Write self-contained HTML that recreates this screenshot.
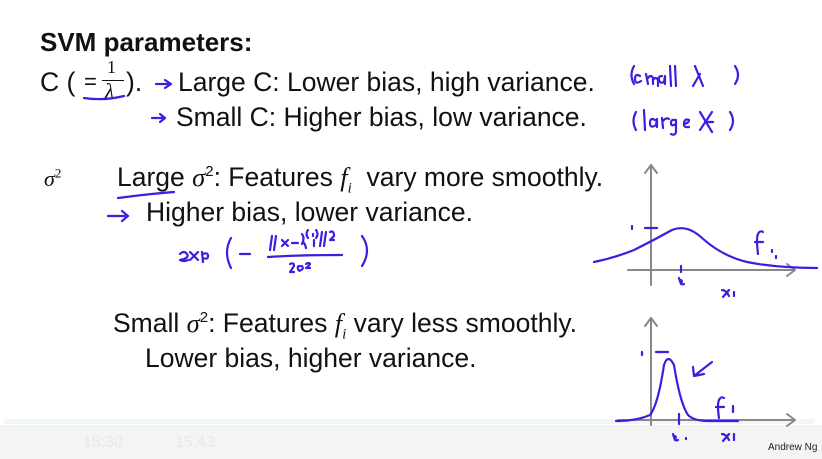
<!DOCTYPE html>
<html><head><style>
body{margin:0;width:822px;height:459px;background:#fff;overflow:hidden;position:relative;font-family:"Liberation Sans",Arial,sans-serif;color:#111}
.t{position:absolute;font-size:26.5px;white-space:nowrap;line-height:30px}
.i{font-family:"Liberation Serif",serif;font-style:italic}
sup,sub{line-height:0}
</style></head><body>
<div class="t" style="left:40px;top:27px;font-weight:bold;font-size:26px">SVM parameters:</div>
<div class="t" style="left:40px;top:67px">C (</div>
<div class="t" style="left:84px;top:67px;font-size:22px">=</div>
<div class="t" style="left:107px;top:52px;font-size:18px;font-family:'Liberation Serif',serif">1</div>
<div style="position:absolute;left:102px;top:80px;width:22px;height:1px;background:#111"></div>
<div class="t i" style="left:105px;top:80px;font-size:21px;line-height:22px">λ</div>
<div class="t" style="left:126px;top:67px">).</div>
<div class="t" style="left:178px;top:67px">Large C: Lower bias, high variance.</div>
<div class="t" style="left:176px;top:102px">Small C: Higher bias, low variance.</div>
<div class="t i" style="left:44px;top:164px;font-size:22px">σ<sup style="font-size:13px;font-style:normal">2</sup></div>
<div class="t" style="left:117px;top:162px">Large <span class="i">σ</span><sup style="font-size:15px">2</sup>: Features <span class="i">f<sub style="font-size:15px">i</sub></span>&nbsp; vary more smoothly.</div>
<div class="t" style="left:146px;top:197px">Higher bias, lower variance.</div>
<div class="t" style="left:113px;top:308px">Small <span class="i">σ</span><sup style="font-size:15px">2</sup>: Features <span class="i">f<sub style="font-size:15px">i</sub></span>&nbsp;vary less smoothly.</div>
<div class="t" style="left:145px;top:343px">Lower bias, higher variance.</div>
<div style="position:absolute;left:0;top:425px;width:822px;height:34px;background:#f4f4f4"></div>
<div style="position:absolute;left:4px;top:419px;width:810px;height:5px;background:#eef8f6"></div>
<div class="t" style="left:83px;top:428px;font-size:16px;color:#e8e8e8">15:30</div>
<div class="t" style="left:175px;top:428px;font-size:16px;color:#e8e8e8">15:43</div>
<div class="t" style="left:768px;top:441px;font-size:10px;color:#222;line-height:14px">Andrew Ng</div>
<svg width="822" height="459" style="position:absolute;left:0;top:0" fill="none" stroke-linecap="round" stroke-linejoin="round">
<g stroke="#888" stroke-width="2">
<path d="M651 285V165M645 173l6-8 6 8"/><path d="M628 270H795M787 264l8 6-8 6"/>
<path d="M651 425V318M645 326l6-8 6 8"/><path d="M618 420H795M787 414l8 6-8 6"/>
</g>
<g stroke="#3b1fe0" stroke-width="2.2">
<path d="M84 98q20 3 40 -2"/>
<path d="M156 84h14M165 80l6 4-6 4"/>
<path d="M152 118h12M160 114l5 4-5 4"/>
<path d="M118 198q30-4 56-6"/>
<path d="M108 216h20M122 211l6 5-6 5"/>
<path d="M634 66q-5 9 0 18M640 76q-5-3-5 3t6 2M646 74l2 10M648 78q3-4 5 0v6M653 80q3-4 5 0v6M662 76q-4 0-3 4t5 2l1-6v8M670 66l1 20M675 66l1 20M695 66l8 20M700 74l-7 12M735 66q6 9 0 18"/>
<path d="M636 112q-5 9 0 18M644 110l1 20M655 120q-5-3-5 3t6 2l1-6v8M662 118l1 10M663 121q3-4 6-2M675 120q-4-1-4 3t5 1M676 120v12q-1 4-5 2M684 124q5-1 5-4-4-2-5 3t5 4M700 112l12 20M712 112l-12 18M705 122h8M730 112q6 9 0 18"/>
<path d="M594 262q20-4 40-12q20-10 38-20q15-6 30 8q20 18 45 24q30 6 70 6"/>
<path d="M645 228h12M632 226v3"/>
<path d="M681 266v6M680 280q3 0 1 4l-2-6q2 8 5 6"/>
<path d="M722 290q4 0 7 6M729 290l-6 7M734 292v4"/>
<path d="M763 232q-3-2-5 2t0 20M755 242h8M772 250v2M776 256v2"/>
<path d="M616 421q20 0 34-6q8-10 14-50q4-12 10 0q6 38 14 50q6 6 20 6h30"/>
<path d="M656 352h12M642 352v3"/>
<path d="M679 414v10M674 436q3 0 1 4l-2-6q2 8 5 6M686 438v1"/>
<path d="M712 362l-18 14M694 376l10-2M694 376l-1-9"/>
<path d="M724 398q-3-2-5 2t0 18M716 407h8M733 406v6"/>
<path d="M722 434q4 0 7 6M729 434l-6 7M734 434v6"/>
<path d="M180 254q4-4 7 0t-7 6q4 2 8 0M190 252l8 8M198 252l-8 8M202 252l1 10M203 254q5-2 5 2t-5 2M231 238q-8 14 0 30M240 254h10"/>
<path d="M272 236l-2 14M276 236l-2 14M282 240l6 6M288 240l-6 6M292 243h6M302 234q3 4 0 10q2-4 4 4M308 230q-3 4 0 8M313 234v2M314 240v6M316 230q3 4 0 8M322 232l-2 14M326 232l-2 14M330 232q4-2 4 4-2 2-4 4h4"/>
<path d="M268 257q30-2 74 -2"/>
<path d="M290 264q4-2 4 2-2 3-4 6h4M300 266q-3 0-2 3t3 1q3-1 1-4M306 264q3-2 4 0-2 3-4 4h4"/>
<path d="M362 236q10 14 0 30"/>
</g>
</svg>
</body></html>
